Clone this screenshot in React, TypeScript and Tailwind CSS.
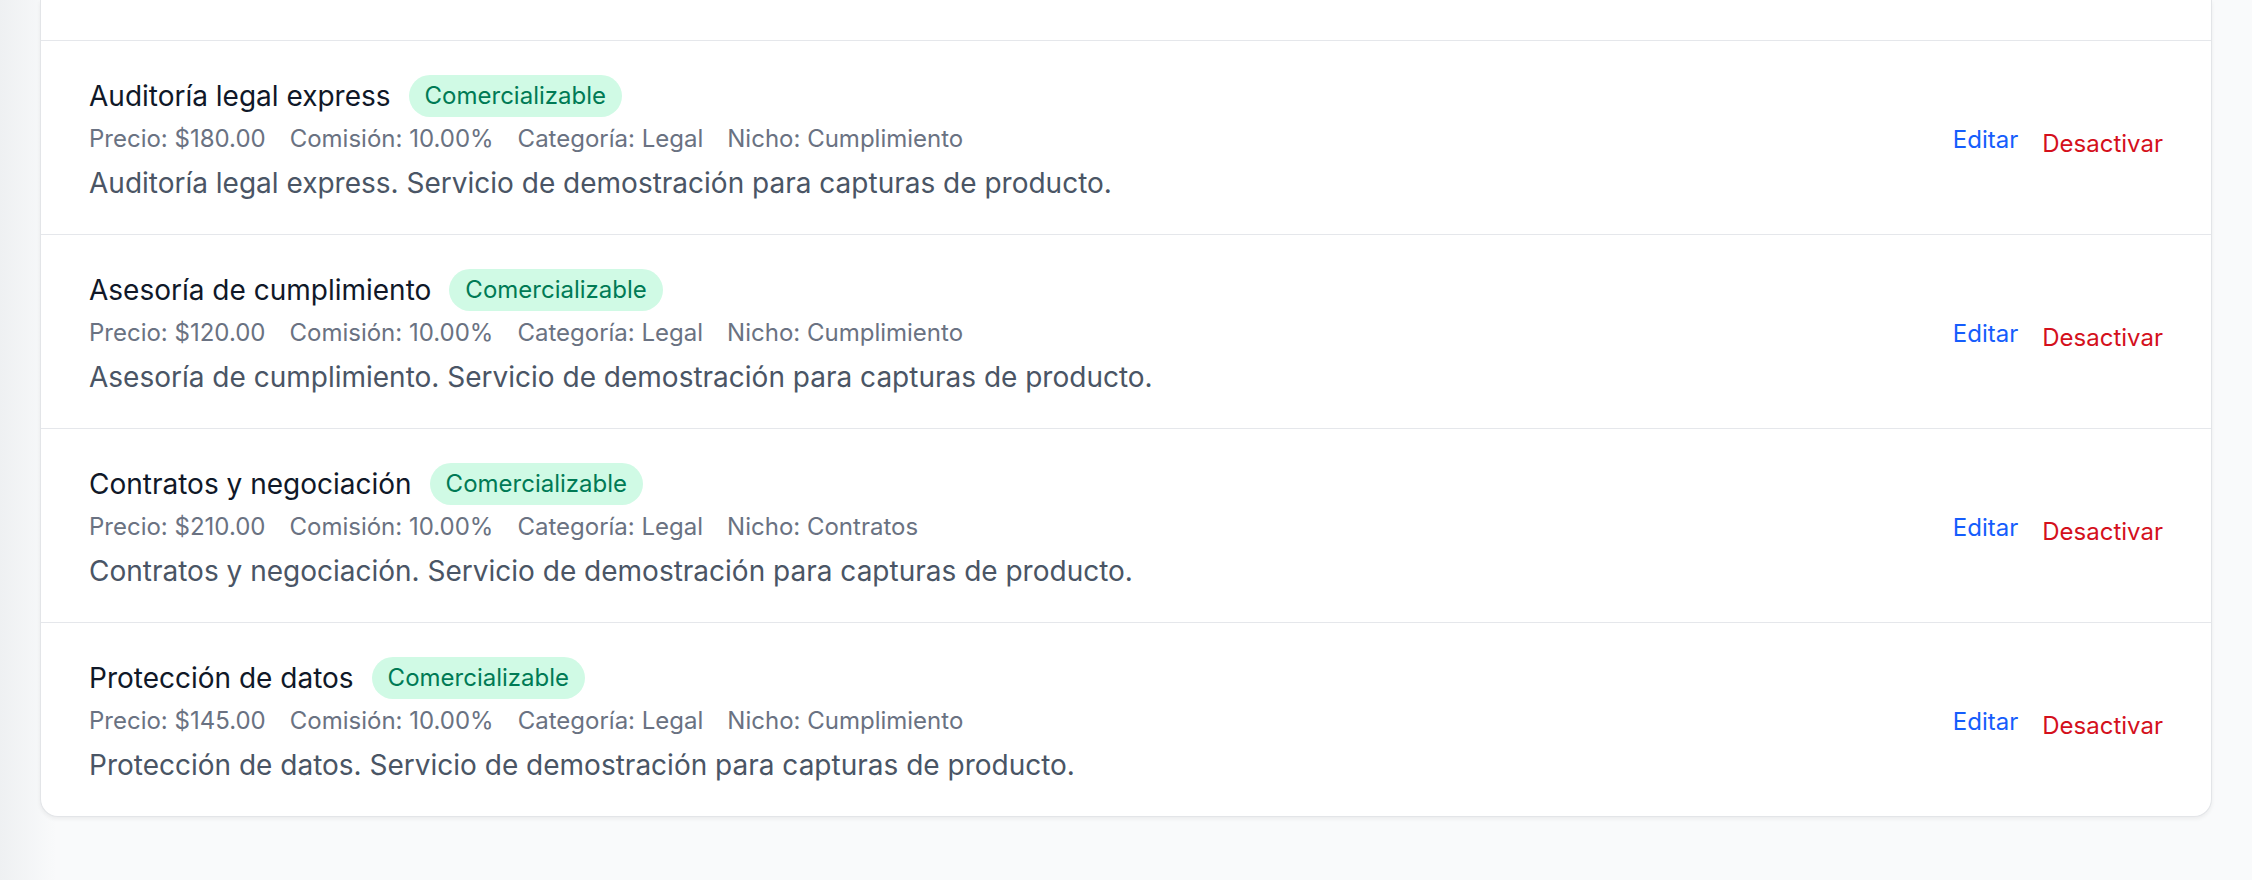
import React from 'react';

type Service = {
    id: number;
    name: string;
    price: string;
    commission: string;
    category: string;
    niche: string;
};

const SERVICES: Service[] = [
    { id: 1, name: 'Auditoría legal express', price: '$180.00', commission: '10.00%', category: 'Legal', niche: 'Cumplimiento' },
    { id: 2, name: 'Asesoría de cumplimiento', price: '$120.00', commission: '10.00%', category: 'Legal', niche: 'Cumplimiento' },
    { id: 3, name: 'Contratos y negociación', price: '$210.00', commission: '10.00%', category: 'Legal', niche: 'Contratos' },
    { id: 4, name: 'Protección de datos', price: '$145.00', commission: '10.00%', category: 'Legal', niche: 'Cumplimiento' },
];

const ServiceRow = ({ service }: { service: Service }) => {
    return (
        <li className="flex items-center justify-between border-t border-[#e5e7eb] pt-[34px] pr-[48px] pb-[30px] pl-[48px]">
            <div className="min-w-0">
                <div className="flex h-[42px] items-center gap-[18px]">
                    <h3 className="text-[28px] leading-[42px] font-normal text-[#101828]">{service.name}</h3>
                    <span className="flex h-[42px] items-center rounded-full bg-[#d0fae5] px-[16px] text-[24px] text-[#007a55]">
                        Comercializable
                    </span>
                </div>
                <div className="mt-[4px] flex gap-x-[24px] text-[24px] leading-[36px] text-[#6a7282]">
                    <span>Precio: {service.price}</span>
                    <span>Comisión: {service.commission}</span>
                    <span>Categoría: {service.category}</span>
                    <span>Nicho: {service.niche}</span>
                </div>
                <p className="mt-[5px] text-[28px] leading-[42px] text-[#4a5565]">
                    {service.name}. Servicio de demostración para capturas de producto.
                </p>
            </div>

            <div className="flex items-center gap-[24px] text-[24px] leading-[36px]">
                <a href="#" className="text-[#155dfc]">
                    Editar
                </a>
                <button type="button" className="pt-[8px] text-[#d4101c]">
                    Desactivar
                </button>
            </div>
        </li>
    );
};

export default function App() {
    return (
        <div
            className="min-h-[880px] bg-[linear-gradient(to_right,#eef0f2,#f9fafb_56px)] px-[40px]"
            style={{ fontFamily: 'Inter, "Noto Sans", sans-serif' }}
        >
            <div className="overflow-hidden rounded-b-[18px] border-x border-b border-[#e3e5e8] bg-white shadow-[0_2px_4px_rgba(0,0,0,0.06)]">
                <div className="h-[40px]" />
                <ul>
                    {SERVICES.map((service) => (
                        <ServiceRow key={service.id} service={service} />
                    ))}
                </ul>
            </div>
        </div>
    );
}
